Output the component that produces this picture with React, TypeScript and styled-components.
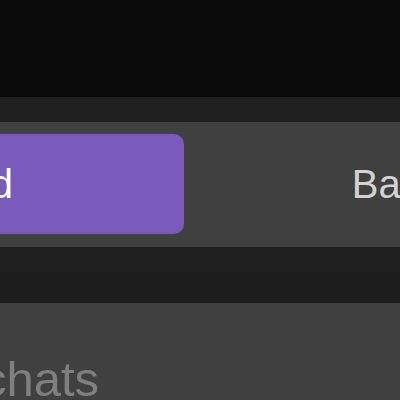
import React from "react";
import styled, { createGlobalStyle } from "styled-components";

const Global = createGlobalStyle`
  html, body {
    margin: 0;
    padding: 0;
    background: #0b0b0b;
    overflow: hidden;
  }
  body {
    font-family: "Liberation Sans", Arial, sans-serif;
  }
`;

const Screen = styled.div`
  width: 400px;
  height: 400px;
  display: flex;
  flex-direction: column;
  overflow: hidden;
  background: #0b0b0b;
`;

const TopArea = styled.div`
  height: 97px;
  flex: 0 0 auto;
  background: #0b0b0b;
`;

const Band = styled.div<{ $h: number; $bg: string }>`
  height: ${(p) => p.$h}px;
  flex: 0 0 auto;
  background: ${(p) => p.$bg};
`;

const SegmentBar = styled.div`
  height: 125px;
  flex: 0 0 auto;
  box-sizing: border-box;
  padding: 12px 0 13px;
  background: #404040;
  display: flex;
  overflow: hidden;
`;

const Segments = styled.div`
  display: flex;
  margin-left: -365px;
  flex: 0 0 auto;
`;

const Segment = styled.div<{ $active?: boolean }>`
  width: 549px;
  height: 100px;
  flex: 0 0 auto;
  border-radius: 10px;
  display: flex;
  align-items: center;
  justify-content: center;
  font-size: 40px;
  padding-top: 1px;
  box-sizing: border-box;
  white-space: nowrap;
  background: ${(p) => (p.$active ? "#7a5bbb" : "transparent")};
  color: ${(p) => (p.$active ? "#ffffff" : "#d3d3d3")};
`;

const Section = styled.div`
  flex: 1 1 auto;
  background: #404040;
  box-sizing: border-box;
  padding-top: 48px;
  overflow: hidden;
`;

const Label = styled.div`
  font-size: 49px;
  color: #7f7f7f;
  margin-left: -18px;
  white-space: nowrap;
`;

export default function App() {
  return (
    <Screen>
      <Global />
      <TopArea />
      <Band $h={25} $bg="#202020" />
      <SegmentBar>
        <Segments>
          <Segment $active>Foreground</Segment>
          <Segment>Background</Segment>
        </Segments>
      </SegmentBar>
      <Band $h={25} $bg="#1f1f1f" />
      <Band $h={31} $bg="#1d1d1d" />
      <Section>
        <Label>chats</Label>
      </Section>
    </Screen>
  );
}
